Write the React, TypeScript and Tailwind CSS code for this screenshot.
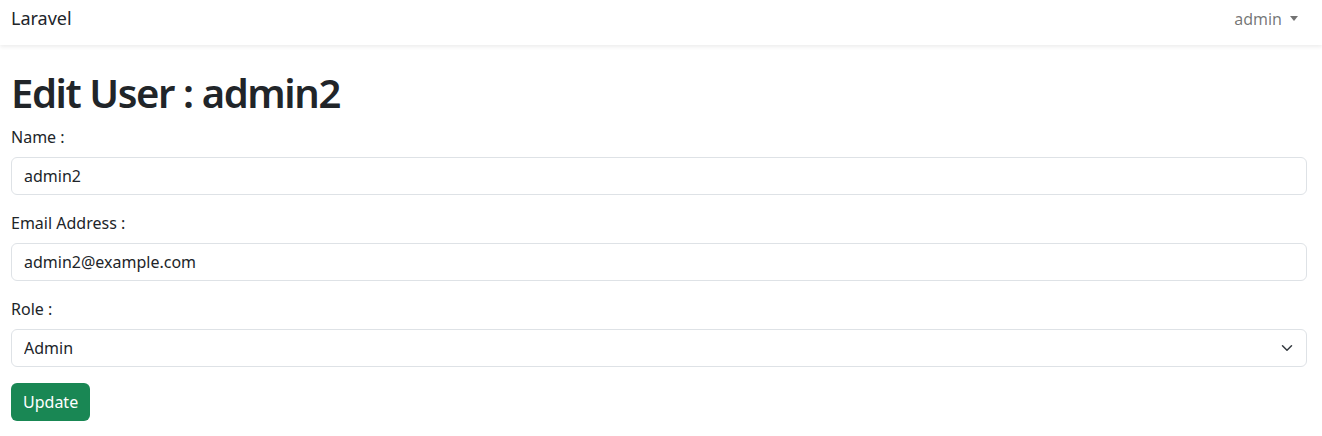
import React from "react";

const font = { fontFamily: '"Segoe UI", "Noto Sans", "Liberation Sans", sans-serif' };

function Field({ label, children }: { label: string; children: React.ReactNode }) {
  return (
    <div className="mb-4">
      <label className="block mb-2 text-[16px] leading-[24px] text-[#212529]">{label}</label>
      {children}
    </div>
  );
}

export default function App() {
  const inputCls =
    "block w-full h-[38px] px-3 text-[16px] text-[#212529] bg-white border border-[#dee2e6] rounded-[6px] outline-none";

  return (
    <div className="min-h-[436px] bg-white text-[#212529]" style={font}>
      <nav className="h-[45px] pb-[8px] bg-white shadow-[0_2px_4px_rgba(0,0,0,0.075)] flex items-center justify-between pl-[11px] pr-[24px]">
        <span className="text-[18px] text-[#212529]">Laravel</span>
        <button className="flex items-center gap-[8px] text-[16px] text-[rgba(0,0,0,0.55)]">
          admin
          <span className="inline-block w-0 h-0 border-x-[4px] border-x-transparent border-t-[5px] border-t-[rgba(0,0,0,0.55)]" />
        </button>
      </nav>

      <main className="pl-[11px] pr-[15px] pt-[24px]">
        <h1 className="text-[40px] leading-[48px] font-semibold tracking-[-1.4px] mb-2">Edit User : admin2</h1>

        <Field label="Name :">
          <input className={inputCls} defaultValue="admin2" />
        </Field>

        <Field label="Email Address :">
          <input className={inputCls} defaultValue="admin2@example.com" />
        </Field>

        <Field label="Role :">
          <div className="relative">
            <select className={`${inputCls} appearance-none pr-9`} defaultValue="admin">
              <option value="admin">Admin</option>
              <option value="user">User</option>
            </select>
            <svg
              className="absolute right-3 top-[13px] w-4 h-3 pointer-events-none"
              viewBox="0 0 16 16"
              fill="none"
              stroke="#343a40"
              strokeWidth="2"
              strokeLinecap="round"
              strokeLinejoin="round"
            >
              <path d="M2 5l6 6 6-6" />
            </svg>
          </div>
        </Field>

        <button className="h-[38px] px-3 text-[16px] text-white bg-[#198754] rounded-[6px]">Update</button>
      </main>
    </div>
  );
}
